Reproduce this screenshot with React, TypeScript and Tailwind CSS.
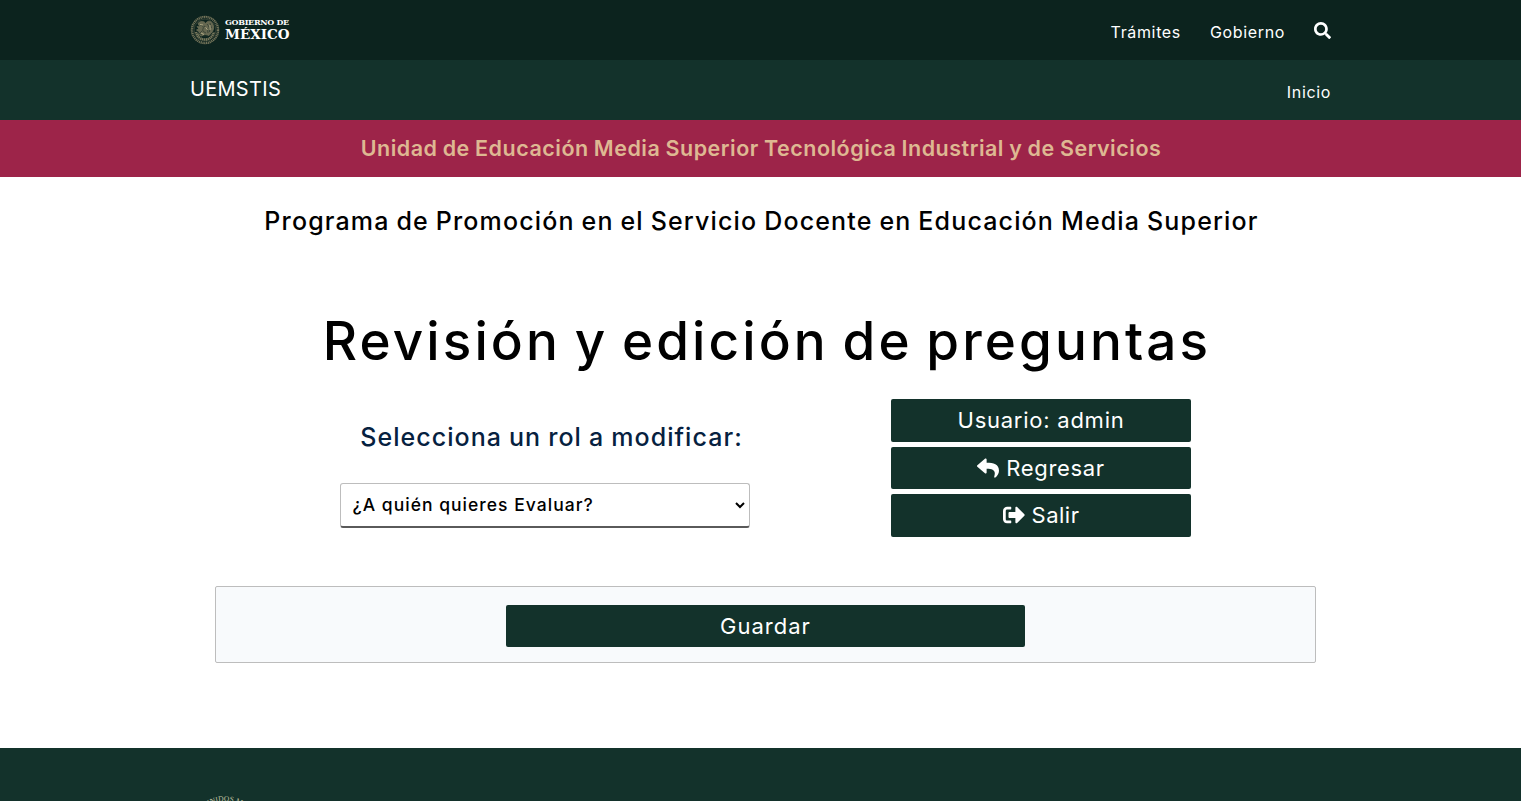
import type { ReactNode } from "react";
import { FaReply, FaSearch, FaSignOutAlt } from "react-icons/fa";

function Seal() {
  return (
    <svg viewBox="0 0 30 30" className="h-[30px] w-[30px] shrink-0" fill="none" stroke="#958e6d">
      <circle cx="15" cy="15" r="12.9" strokeWidth="2.3" strokeDasharray="1.1 0.7" opacity="0.75" />
      <circle cx="15" cy="15" r="14" strokeWidth="0.5" opacity="0.6" />
      <circle cx="15" cy="15" r="10.9" strokeWidth="0.5" opacity="0.55" />
      <path
        d="M6 17c1.500 5 5 7.500 9 7.500s7.500-2.500 9-7.500"
        strokeWidth="2.400"
        strokeDasharray="1.400 0.500"
        opacity="0.8"
      />
      <path
        d="M8 8.500c2.500-3 6.500-2.500 7.500 0 2-3 5-3 7 0 1.800 3 1.500 6-.5 8.500l-3 3.500-4-1-3.500 1.500-3.500-2 1.500-2-3-2 2.500-1-2-2.500 3 .5z"
        fill="#8c8667"
        strokeWidth="0.800"
        opacity="0.7"
      />
      <path
        d="M14 11c2 1 4 3 4 7M17 9c2 2 3 5 2.500 8M10 10c3 0 4 2 3 4s1 3 3 4M8 18l4 2M12 16l-3 3M20 8l1.500 5M13 21h5"
        stroke="#27372c"
        strokeWidth="0.700"
      />
      <path d="M10 9.500l3 .5M15.500 12l2 3M11 18l3 1.500M20 10v5" stroke="#c5bc94" strokeWidth="0.800" />
    </svg>
  );
}

function FooterSeal() {
  return (
    <svg viewBox="0 0 80 80" className="h-20 w-20">
      <path id="seal-arc" d="M6 40a34 34 0 0 1 68 0" fill="none" />
      <text
        className="font-['Liberation_Serif',serif] text-[7.5px]"
        fill="#c3c4a4"
        textAnchor="middle"
      >
        <textPath href="#seal-arc" startOffset="50%">
          ESTADOS UNIDOS MEXICANOS
        </textPath>
      </text>
      <circle cx="40" cy="40" r="30" fill="none" stroke="#b9ba98" />
    </svg>
  );
}

function PanelButton({ children }: { children: ReactNode }) {
  return (
    <button className="flex h-[42.5px] w-full items-center justify-center gap-[7px] rounded-[2px] bg-[#13322b] text-[22px] leading-none text-white">
      {children}
    </button>
  );
}

export default function App() {
  return (
    <div className="h-[801px] w-full overflow-hidden bg-white font-['Inter',sans-serif] whitespace-nowrap text-black">
      <div className="flex h-full w-[1521px] flex-col">
        <header className="flex h-[60px] shrink-0 justify-between bg-[#0c231e] pr-[190px] pl-[190px] text-white">
          <div className="flex h-[59px] items-center gap-[5px]">
            <Seal />
            <div className="flex flex-col font-['DejaVu_Serif',serif] leading-none font-bold">
              <span className="text-[8px] tracking-[-0.3px]">GOBIERNO DE</span>
              <span className="mt-[2px] text-[13.5px]">MÉXICO</span>
            </div>
          </div>
          <nav className="flex h-[64px] items-center text-[16px]">
            <a className="mr-[29px] tracking-[0.65px]">Trámites</a>
            <a className="mr-[29px] tracking-[0.65px]">Gobierno</a>
            <FaSearch className="mb-[3px] h-[17px] w-[17px]" />
          </nav>
        </header>

        <div className="flex h-[60px] shrink-0 justify-between bg-[#13322b] pr-[190px] pl-[190px] text-white">
          <span className="flex h-[57px] items-center text-[20px] tracking-[0.3px]">UEMSTIS</span>
          <a className="flex h-[64px] items-center text-[16px] tracking-[0.65px]">Inicio</a>
        </div>

        <div className="flex h-[57px] shrink-0 items-center justify-center bg-[#9d2449] pl-px text-[21.5px] font-semibold tracking-[0.5px] text-[#deb892] [word-spacing:-0.7px]">
          Unidad de Educación Media Superior Tecnológica Industrial y de Servicios
        </div>

        <main className="flex h-[571px] shrink-0 flex-col items-center">
          <h2 className="mt-[24px] h-10 pl-[2px] text-[25px] leading-10 font-medium tracking-[1.15px] [word-spacing:-0.9px]">
            Programa de Promoción en el Servicio Docente en Educación Media Superior
          </h2>
          <h1 className="mt-[60px] h-20 pl-[13px] text-[53px] leading-[80px] font-medium tracking-[3.1px] [word-spacing:-3.5px]">
            Revisión y edición de preguntas
          </h1>

          <div className="mt-[18px] flex h-[138px] gap-[141px] pl-[10px]">
            <div className="flex w-[410px] flex-col items-center">
              <h3 className="mt-[18px] h-10 pl-[13px] text-[25px] leading-10 font-medium tracking-[1.05px] text-[#06213f] [word-spacing:-0.7px]">
                Selecciona un rol a modificar:
              </h3>
              <div className="mt-[26px] flex h-[45px] w-full items-center justify-between rounded-[3px] border border-b-2 border-[#bdbdbd] border-b-[#5a5a5a] bg-white pr-[4px] pl-[11.5px] text-[17.5px] font-medium tracking-[1.02px]">
                ¿A quién quieres Evaluar?
                <svg viewBox="0 0 10 7" className="h-[7px] w-[10px]" fill="none" stroke="#000" strokeWidth="2">
                  <path d="M1 1l4 4 4-4" />
                </svg>
              </div>
            </div>
            <div className="flex w-[300px] flex-col gap-[5px]">
              <PanelButton>
                <span className="tracking-[0.75px]">Usuario: admin</span>
              </PanelButton>
              <PanelButton>
                <FaReply className="h-[22px] w-[22px]" />
                <span className="tracking-[0.65px]">Regresar</span>
              </PanelButton>
              <PanelButton>
                <FaSignOutAlt className="h-[22px] w-[22px]" />
                <span className="tracking-[0.5px]">Salir</span>
              </PanelButton>
            </div>
          </div>

          <section className="mt-[49px] ml-[10px] flex h-[77px] w-[1101px] justify-center rounded-[2px] border border-[#bdbdbd] bg-[#f8fafc] pt-[18px]">
            <button className="h-[42px] w-[519px] rounded-[2px] bg-[#13322b] text-[22px] leading-none tracking-[1px] text-white">
              Guardar
            </button>
          </section>
        </main>

        <footer className="h-[53px] shrink-0 overflow-hidden bg-[#13322b] pt-[47px] pl-[185px]">
          <FooterSeal />
        </footer>
      </div>
    </div>
  );
}
